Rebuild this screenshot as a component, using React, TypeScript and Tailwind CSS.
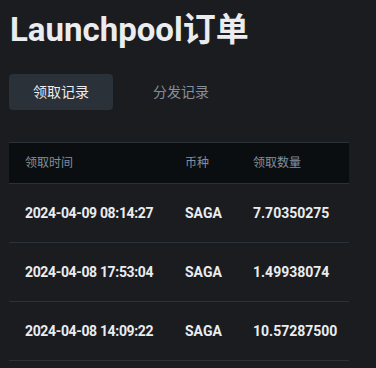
import React from "react";

const rows = [
  { time: "2024-04-09 08:14:27", coin: "SAGA", amount: "7.70350275" },
  { time: "2024-04-08 17:53:04", coin: "SAGA", amount: "1.49938074" },
  { time: "2024-04-08 14:09:22", coin: "SAGA", amount: "10.57287500" },
];

const font = { fontFamily: '"Roboto", "Noto Sans CJK SC", sans-serif' };

export default function App() {
  return (
    <div className="w-[376px] h-[368px] bg-[#1b1c20] px-[9px] overflow-hidden" style={font}>
      <h1 className="pt-[10px] text-[33px] leading-[40px] font-bold text-[#eaecef] pl-[1px]">
        Launchpool订单
      </h1>
      <div className="mt-[24px] flex gap-[16px]">
        <div className="w-[104px] h-[36px] rounded-[4px] bg-[#2b3139] flex items-center justify-center text-[14px] text-[#eaecef]">
          领取记录
        </div>
        <div className="w-[104px] h-[36px] rounded-[4px] flex items-center justify-center text-[14px] text-[#848e9c]">
          分发记录
        </div>
      </div>
      <div className="mt-[32px] w-[340px]">
        <div className="h-[42px] bg-[#0b0e11] border-y border-[#2b3139] flex items-center text-[12px] text-[#848e9c]">
          <div className="w-[176px] pl-[16px]">领取时间</div>
          <div className="w-[68px]">币种</div>
          <div className="flex-1">领取数量</div>
        </div>
        {rows.map((r) => (
          <div
            key={r.time}
            className="h-[59px] border-b border-[#2b3139] flex items-center text-[14px] font-bold text-[#eaecef]"
          >
            <div className="w-[176px] pl-[16px] tracking-[-0.35px]">{r.time}</div>
            <div className="w-[68px]">{r.coin}</div>
            <div className="flex-1">{r.amount}</div>
          </div>
        ))}
      </div>
    </div>
  );
}
